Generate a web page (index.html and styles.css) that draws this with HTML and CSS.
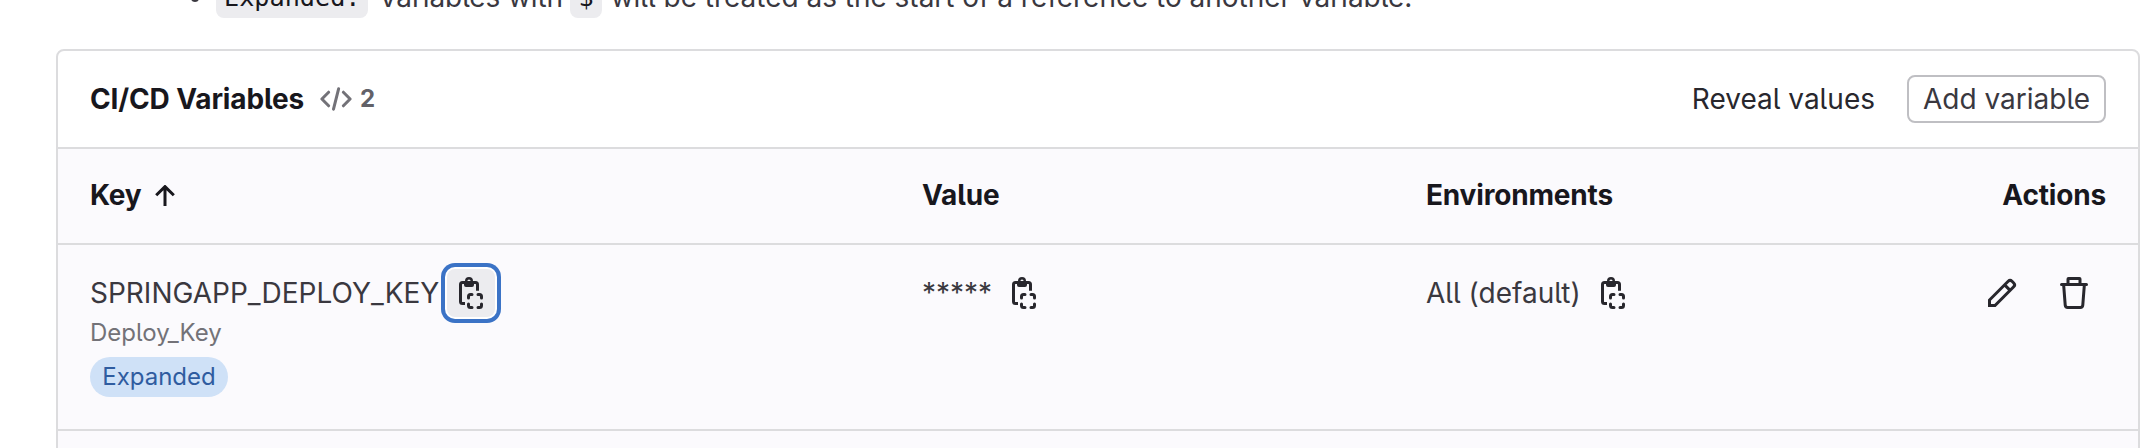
FILE: index.html
```html
<!DOCTYPE html>
<html lang="en">
<head>
<meta charset="utf-8">
<title>CI/CD Variables</title>
<link rel="stylesheet" href="styles.css">
</head>
<body>
<svg class="sprite" aria-hidden="true">
  <symbol id="copy" viewBox="0 0 16 16">
    <path class="line" d="M5 13.250H3.750a1 1 0 0 1-1-1v-8.500a1 1 0 0 1 1-1h6.500a1 1 0 0 1 1 1V6.900"/>
    <path fill-rule="evenodd" d="M7 0a2 2 0 0 0-2 2h-.5v2a1 1 0 0 0 1 1h3a1 1 0 0 0 1-1V2H9a2 2 0 0 0-2-2zm0 1.250a.8.8 0 1 1 0 1.600.8.8 0 0 1 0-1.600z"/>
    <path class="line round" d="M6.750 10.500v-.75a1 1 0 0 1 1-1h.75M11.500 8.750h.75a1 1 0 0 1 1 1v.75M13.250 13.500v.75a1 1 0 0 1-1 1h-.75M8.500 15.250h-.75a1 1 0 0 1-1-1v-.75"/>
  </symbol>
</svg>
<main class="page">
  <ul class="notes">
    <li><code>Expanded:</code><span class="note-a">Variables with</span><code>$</code><span class="note-b">will be treated as the start of a reference to another variable.</span></li>
  </ul>
  <section class="card">
    <header class="card-head">
      <h2>CI/CD Variables</h2>
      <svg class="icon muted" viewBox="0 0 16 16"><path class="line round" d="M4.300 4.600.95 8l3.350 3.400M11.700 4.600 15.050 8l-3.350 3.400M9.300 2.900 6.750 13.100"/></svg>
      <span class="count">2</span>
      <span class="reveal">Reveal values</span>
      <button class="add"><span>Add variable</span></button>
    </header>
    <div class="row head">
      <div class="cell"><span class="h-key">Key</span><svg class="arrow" viewBox="0 0 20 21"><path d="M10 21V2M1.200 10.300 10 1.600l8.800 8.700"/></svg></div>
      <div class="cell"><span class="h-value">Value</span></div>
      <div class="cell"><span class="h-env">Environments</span></div>
      <div class="cell end"><span class="h-act">Actions</span></div>
    </div>
    <div class="row body">
      <div class="cell key">
        <div class="line1"><span class="name">SPRINGAPP_DEPLOY_KEY</span><button class="copy focused"><svg class="icon"><use href="#copy"/></svg></button></div>
        <div class="desc"><span>Deploy_Key</span></div>
        <span class="badge">Expanded</span>
      </div>
      <div class="cell line1"><span class="stars">*****</span><button class="copy"><svg class="icon"><use href="#copy"/></svg></button></div>
      <div class="cell line1"><span class="env">All (default)</span><button class="copy"><svg class="icon"><use href="#copy"/></svg></button></div>
      <div class="cell line1 actions">
        <button class="copy"><svg class="icon" viewBox="0 0 16 16"><path class="line" d="M1.750 14.250V11.500L11.100 2.150a1.350 1.350 0 0 1 1.900 0l.85.85a1.350 1.350 0 0 1 0 1.900L4.500 14.250zM9.300 3.950l2.750 2.750"/></svg></button>
        <button class="copy"><svg class="icon" viewBox="0 0 16 16"><path fill-rule="evenodd" d="M5.75 3V1.500h4.500V3h-4.500zm-1.500 0V1a1 1 0 0 1 1-1h5.500a1 1 0 0 1 1 1v2h2.500a.75.75 0 0 1 0 1.500h-.365l-.743 9.653A2 2 0 0 1 11.148 16H4.852a2 2 0 0 1-1.994-1.847L2.115 4.500H1.750a.75.75 0 0 1 0-1.500h2.500zm-.63 1.500h8.760l-.734 9.538a.5.5 0 0 1-.498.462H4.852a.5.5 0 0 1-.498-.462L3.620 4.500z"/></svg></button>
      </div>
    </div>
    <div class="row next"></div>
  </section>
</main>
</body>
</html>
```
FILE: styles.css
```css
* { box-sizing: border-box; }
body {
  margin: 0;
  height: 448px;
  overflow: hidden;
  background: #fff;
  color: #3a383f;
  font: 28px/40px Inter, "Liberation Sans", sans-serif;
  font-feature-settings: "cv05";
}
.sprite { display: none; }
.page { height: 448px; overflow: hidden; padding: 0 8px 0 56px; }
.notes { list-style: none; margin: -24px 0 31px; padding: 0 0 0 160px; }
.notes li { display: flex; align-items: center; height: 42px; white-space: nowrap; }
.notes li::before {
  content: "";
  width: 8px;
  height: 8px;
  margin: 1px 17px 0 -25px;
  border-radius: 50%;
  background: #3a383f;
}
code {
  height: 42px;
  padding: 0 8px;
  border-radius: 8px;
  background: #ececef;
  color: #18171d;
  font: 25.200px/43px "DejaVu Sans Mono", monospace;
}
.note-a { width: 202px; padding-left: 10px; letter-spacing: -0.1px; }
.note-b { padding-left: 9px; letter-spacing: -0.02px; }
.card {
  height: 420px;
  border: 2px solid #dcdcde;
  border-radius: 8px;
}
.card-head { display: flex; align-items: center; height: 96px; padding: 0 32px; }
h2 { margin: 0; width: 230px; color: #18171d; font-size: 28px; font-weight: 700; letter-spacing: -0.14px; white-space: nowrap; }
.icon { display: block; flex: none; width: 32px; height: 32px; fill: #28272d; color: #28272d; }
.line { fill: none; stroke: currentColor; stroke-width: 1.500; }
.round { stroke-linecap: round; stroke-linejoin: round; }
.muted { color: #737278; }
.count { margin-left: 8px; color: #626168; font-size: 24px; font-weight: 700; }
.reveal { margin-left: auto; color: #28272d; }
.add {
  width: 199px;
  height: 48px;
  margin-left: 32px;
  padding: 0;
  border: 2px solid #bfbfc3;
  border-radius: 8px;
  background: #fff;
  color: #3a383f;
  font: inherit;
  white-space: nowrap;
}
.row {
  display: grid;
  grid-template-columns: 832px 504px 1fr auto;
  padding: 0 32px;
  border-top: 2px solid #dcdcde;
  background: #fbfafd;
}
.head { height: 96px; padding-bottom: 2px; align-items: center; color: #18171d; font-weight: 700; letter-spacing: -0.17px; }
.head .cell { display: flex; align-items: center; }
.h-key { width: 65px; }
.arrow { width: 20px; height: 21px; fill: none; stroke: #18171d; stroke-width: 3; }
.body { height: 186px; padding-top: 24px; }
.next { height: 40px; }
.line1 { display: flex; align-items: center; height: 48px; white-space: nowrap; }
.name { width: 357px; }
.copy { width: 48px; height: 48px; padding: 8px; border: 0; border-radius: 8px; background: none; }
.focused { background: #ececef; box-shadow: 0 0 0 2px #fff, 0 0 0 6px #3b73c6; }
.desc { height: 32px; color: #737278; font-size: 24px; line-height: 32px; }
.badge {
  display: flex;
  align-items: center;
  justify-content: center;
  width: 138px;
  height: 40px;
  margin-top: 8px;
  border-radius: 20px;
  background: #cfe1f7;
  color: #2f5ca0;
  font-size: 24px;
}
.stars { width: 78px; }
.env { width: 163px; }
.actions { gap: 24px; padding-right: 8px; }
```
